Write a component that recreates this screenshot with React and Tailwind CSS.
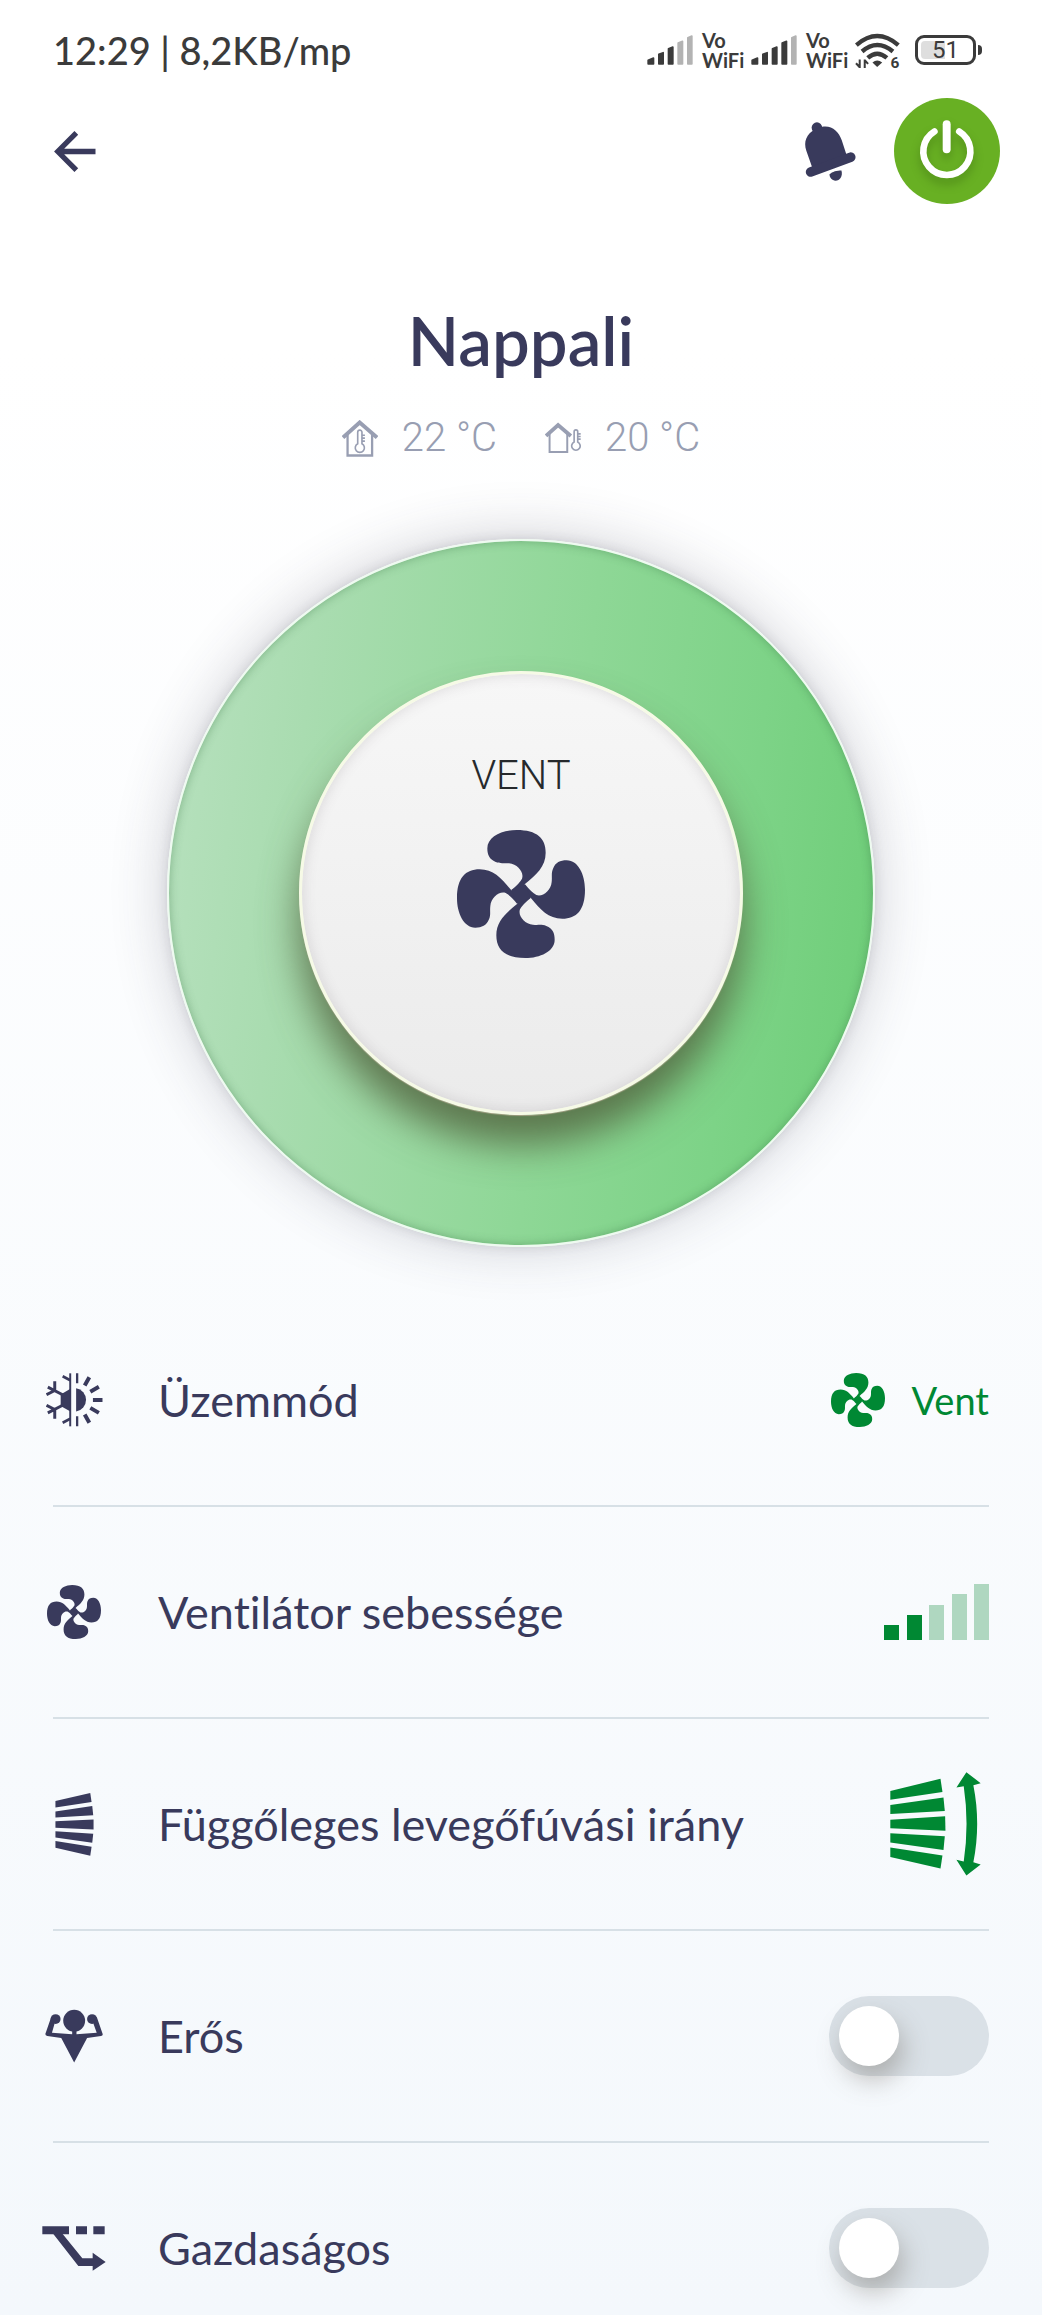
import { useState } from "react";

// =====================================
// ICONS
// =====================================

const BLADE =
  "M163 180 Q188 160 195 146 C202 128 182 102 156 100 C140 98 130 102 116 96 C97 88 91 75 91 55 C91 20 135 0 179 0 C240 0 266 25 266 68 C266 110 238 134 203 163 L192 192 Z";

function FanIcon({ className }) {
  return (
    <svg viewBox="0 0 384 384" fill="currentColor" className={className} aria-hidden="true">
      <path d={BLADE} />
      <path d={BLADE} transform="rotate(90 192 192)" />
      <path d={BLADE} transform="rotate(180 192 192)" />
      <path d={BLADE} transform="rotate(270 192 192)" />
      <path d="M163 180 L203 163 L221 203 L181 221 Z" />
    </svg>
  );
}

function BackIcon() {
  return (
    <svg viewBox="0 0 126 124" className="h-[41px] w-[42px]" fill="none" stroke="currentColor" strokeWidth="16" aria-hidden="true">
      <path d="M67 6 L11 62 L67 118 M11 62 H125" />
    </svg>
  );
}

function BellIcon() {
  return (
    <svg viewBox="523 365 154 178" className="h-[59px] w-[51px]" fill="currentColor" aria-hidden="true">
      <circle cx="559" cy="382" r="16" />
      <path d="M544 500 L527 452 C515 417 535 388 575 379 C604 374 625 393 634 420 L647 460 L655 480 L548 518 Z" />
      <path d="M540 516 L661 471" stroke="currentColor" strokeWidth="29" strokeLinecap="round" />
      <path d="M597 523 C605 514 620 511 633 511 C638 528 628 542 615 542 C605 542 597 534 597 523 Z" />
    </svg>
  );
}

function PowerIcon() {
  return (
    <svg
      viewBox="790 294 320 320"
      className="h-full w-full drop-shadow-[0_6px_5px_rgba(40,80,10,0.35)]"
      fill="none"
      stroke="white"
      strokeLinecap="round"
      aria-hidden="true"
    >
      <path d="M912 395 A71 71 0 1 0 987 395" strokeWidth="20" />
      <path d="M949 373 V449" strokeWidth="24" />
    </svg>
  );
}

function SignalIcon({ level }) {
  const bars = [
    "M56 183 L72 176 V194 H56 Z",
    "M88 165 L101 160 V194 H88 Z",
    "M117 148 L130 143 V194 H117 Z",
    "M146 131 L159 126 V194 H146 Z",
    "M175 115 L187 110 V194 H175 Z",
  ];

  return (
    <svg viewBox="53 107 137 90" className="h-[30px] w-[46px]" strokeWidth="5" strokeLinejoin="round" aria-hidden="true">
      {bars.map((d, i) => (
        <path
          key={d}
          d={d}
          className={i < level ? "fill-[#3b3b3b] stroke-[#3b3b3b]" : "fill-[#b3b3b3] stroke-[#b3b3b3]"}
        />
      ))}
    </svg>
  );
}

function WifiIcon() {
  return (
    <svg viewBox="680 80 140 140" className="size-[47px] font-[Roboto]" fill="none" stroke="currentColor" aria-hidden="true">
      <path d="M684 134 Q746 80 809 134" strokeWidth="13" />
      <path d="M701 153 Q746 114 793 153" strokeWidth="13" />
      <path d="M718 172 Q746 147 775 172" strokeWidth="13" />
      <path d="M732 186 Q746 174 761 186 L746 199 Z" fill="currentColor" stroke="none" />
      <path d="M694 177 V202 M683 188 L694 200 M709 202 V177 M719 190 L709 179" strokeWidth="6" />
      <text x="786" y="203" fontSize="46" fontWeight="700" fill="currentColor" stroke="none">6</text>
    </svg>
  );
}

function HouseInIcon() {
  return (
    <svg viewBox="131 413 110 112" className="h-[37px] w-9" fill="none" stroke="currentColor" aria-hidden="true">
      <path d="M134 466 L185 420 L238 466" strokeWidth="12" />
      <path d="M148 456 V521 H223 V456" strokeWidth="7" />
      <path d="M179 485 V450 a6 6 0 0 1 13 0 V485 a14 14 0 1 1 -13 0 Z" strokeWidth="5" />
      <path d="M192 459 H201 M192 468 H201 M192 477 H201" strokeWidth="5" />
    </svg>
  );
}

function HouseOutIcon() {
  return (
    <svg viewBox="734 413 110 112" className="h-[37px] w-9" fill="none" stroke="currentColor" aria-hidden="true">
      <path d="M737 461 L774 428 L813 461" strokeWidth="12" />
      <path d="M748 452 V510 H802 V452" strokeWidth="6" />
      <path d="M823 480 V448 a5 5 0 0 1 11 0 V480 a13 13 0 1 1 -11 0 Z" strokeWidth="5" />
      <path d="M834 455 H843 M834 463 H843 M834 471 H843" strokeWidth="5" />
    </svg>
  );
}

function ModeIcon() {
  return (
    <svg viewBox="80 97 172 164" className="h-[54px] w-[57px]" fill="none" stroke="currentColor" aria-hidden="true">
      <path d="M155 144 L124 162 V197 L155 215 Z" fill="currentColor" stroke="none" />
      <path d="M153 98 V259" strokeWidth="6" />
      <path d="M130 107 L153 119 M130 248 L153 236" strokeWidth="8" />
      <path d="M85 140 L130 163 M81 163 L106 150 M106 122 V150" strokeWidth="9" />
      <path d="M85 218 L130 195 M81 195 L106 208 M106 236 V208" strokeWidth="9" />
      <path d="M171 143 A36 36 0 0 1 171 214 Z" fill="currentColor" stroke="none" />
      <path d="M174 98 V128 M174 228 V259" strokeWidth="7" />
      <path d="M197 135 L211 110 M214 154 L240 139 M222 179 H251 M214 203 L240 218 M197 223 L211 248" strokeWidth="12" />
    </svg>
  );
}

function VaneIcon() {
  return (
    <svg viewBox="104 126 117 190" className="h-[63px] w-[39px]" fill="currentColor" aria-hidden="true">
      <path d="M105 150 L210 126 L214 153 L105 170 Z" />
      <path d="M105 182 L216 165 L219 193 L105 200 Z" />
      <path d="M105 211 L220 206 V236 L105 231 Z" />
      <path d="M105 241 L219 249 L216 276 L105 260 Z" />
      <path d="M105 271 L214 288 L210 315 L105 291 Z" />
    </svg>
  );
}

function SwingIcon() {
  return (
    <svg viewBox="271 97 274 312" className="mr-2 h-[104px] w-[91px]" fill="currentColor" aria-hidden="true">
      <path d="M272 154 L423 117 L429 157 L272 180 Z" />
      <path d="M272 196 L432 173 L436 214 L272 223 Z" />
      <path d="M272 240 L437 230 L438 273 L272 266 Z" />
      <path d="M272 281 L436 290 L432 331 L272 309 Z" />
      <path d="M272 324 L429 348 L423 387 L272 352 Z" />
      <path d="M501 97 L544 130 L522 136 Q545 252 522 368 L544 375 L501 408 L471 361 L493 366 Q510 252 493 139 L471 143 Z" />
    </svg>
  );
}

function StrongIcon() {
  return (
    <svg viewBox="75 777 175 162" className="h-[54px] w-[58px]" fill="currentColor" aria-hidden="true">
      <circle cx="163" cy="812" r="33" />
      <circle cx="107" cy="807" r="15" />
      <circle cx="217" cy="807" r="15" />
      <path d="M94 800 L76 852 Q76 857 82 858 L124 864 L163 938 L202 864 L244 858 Q250 857 249 852 L231 800 L221 820 L231 848 L170 853 V840 H157 V853 L96 848 L104 820 Z" />
    </svg>
  );
}

function EcoIcon() {
  return (
    <svg viewBox="66 230 192 135" className="h-[45px] w-16" fill="currentColor" aria-hidden="true">
      <path d="M67 231 H147 V255 H67 Z M168 231 H201 V255 H168 Z M220 231 H254 V255 H220 Z" />
      <path d="M100 254 H128 L187 327 H218 V310 L257 338 L218 364 V350 H175 Z" />
    </svg>
  );
}


// =====================================
// PARTS
// =====================================

function VoWifi() {
  return (
    <span className="w-10 text-[20px] font-bold leading-[20px]">
      Vo
      <br />
      WiFi
    </span>
  );
}

function StatusBar() {
  return (
    <div className="flex h-[100px] items-center justify-between pl-[53px] pr-[60px] text-[#3b3b3b]">
      <p className="text-[38px] font-medium leading-[48px]">12:29 | 8,2KB/mp</p>

      <div className="flex items-center gap-[9px]">
        <SignalIcon level={3} />
        <VoWifi />
        <SignalIcon level={4} />
        <VoWifi />
        <WifiIcon />

        <div className="ml-1 flex items-center gap-[2px]">
          <div className="h-[30px] w-[61px] rounded-[9px] border-[3px] border-[#3b3b3b] p-[3px]">
            <div className="flex h-full justify-center rounded-[4px] bg-linear-to-r from-[#dedede] from-50% to-transparent to-50% font-[Roboto] text-[24px] leading-[18px]">
              51
            </div>
          </div>
          <div className="h-[10px] w-1 rounded-r-sm bg-[#3b3b3b]" />
        </div>
      </div>
    </div>
  );
}

function Toggle({ id, checked, onChange }) {
  return (
    <input
      id={id}
      type="checkbox"
      role="switch"
      checked={checked}
      onChange={(e) => onChange(e.target.checked)}
      className="h-20 w-40 cursor-pointer appearance-none rounded-full bg-[#dae1e7] p-[10px] before:block before:size-[60px] before:rounded-full before:bg-white before:shadow-[4px_14px_26px_rgba(90,80,70,0.35)] before:transition checked:bg-[#008833] checked:before:translate-x-20"
    />
  );
}

function SpeedBars({ speed }) {
  const heights = ["h-[15px]", "h-[25px]", "h-[35px]", "h-[46px]", "h-[56px]"];

  return (
    <div className="flex w-[105px] items-end justify-between">
      {heights.map((h, i) => (
        <div
          key={h}
          className={`${h} w-[15px] ${i < speed ? "bg-[#008833]" : "bg-[#afd7c0]"}`}
        />
      ))}
    </div>
  );
}

function Row({ icon, label, htmlFor, children }) {
  return (
    <li className="flex h-[212px] items-center border-b-2 border-[#d7e0e6]">
      <div className="-ml-[11px] flex w-16 justify-center">{icon}</div>
      <label htmlFor={htmlFor} className="ml-[52px] flex-1 text-[45px] leading-[52px]">
        {label}
      </label>
      <div className="flex items-center text-[#008833]">{children}</div>
    </li>
  );
}


export default function App() {
  const [strong, setStrong] = useState(false);
  const [eco, setEco] = useState(false);

  return (
    <main className="h-screen overflow-hidden bg-linear-to-b from-white from-15% to-[#f4f8fc] font-[Lato,sans-serif] text-[#393a5c] [font-variant-ligatures:none]">
      <StatusBar />

      <header className="-mt-[2px] flex h-[106px] items-center pl-[54px] pr-[42px]">
        <button aria-label="Vissza" className="mr-auto">
          <BackIcon />
        </button>
        <button aria-label="Értesítések" className="mr-[38px]">
          <BellIcon />
        </button>
        <button aria-label="Be/ki" className="size-[106px] rounded-full bg-[#68b023]">
          <PowerIcon />
        </button>
      </header>

      <h1 className="mt-24 text-center text-[67px] font-semibold leading-[80px]">Nappali</h1>

      <div className="mt-[34px] flex items-center justify-center gap-12 font-[Roboto] text-[40px] font-light leading-[48px] text-[#989eb2]">
        <p className="flex items-center gap-6">
          <HouseInIcon />
          22 °C
        </p>
        <p className="flex items-center gap-6">
          <HouseOutIcon />
          20 °C
        </p>
      </div>

      {/* DIAL */}

      <div className="mx-auto mt-[77px] flex size-[708px] items-center justify-center rounded-full border-2 border-[#eefaf0] bg-linear-[97deg,#b8e1bf,#a9dcb0_20%,#8ed796_55%,#7dd387_78%,#6ccd76] shadow-[0_-2px_56px_rgba(60,60,80,0.24),0_0_12px_rgba(60,60,80,0.16),inset_0_0_10px_rgba(60,120,70,0.45)]">
        <div className="flex size-[444px] flex-col items-center rounded-full border-[3px] border-[#f6fae6] bg-linear-to-b from-[#f7f7f7] to-[#ebebeb] pt-[78px] shadow-[0_1px_1px_#a9a48a,0_30px_38px_rgba(78,92,58,0.78),inset_0_0_14px_rgba(90,80,90,0.18)]">
          <p className="font-[Roboto] text-[40px] font-light leading-[48px] text-[#26292c]">VENT</p>
          <FanIcon className="mt-[30px] size-32" />
        </div>
      </div>

      {/* SETTINGS */}

      <ul className="mt-12 px-[53px]">
        <Row icon={<ModeIcon />} label="Üzemmód">
          <FanIcon className="size-[54px]" />
          <span className="ml-[26px] text-[38px] leading-[48px]">Vent</span>
        </Row>

        <Row icon={<FanIcon className="size-[54px]" />} label="Ventilátor sebessége">
          <SpeedBars speed={2} />
        </Row>

        <Row icon={<VaneIcon />} label="Függőleges levegőfúvási irány">
          <SwingIcon />
        </Row>

        <Row icon={<StrongIcon />} label="Erős" htmlFor="strong">
          <Toggle id="strong" checked={strong} onChange={setStrong} />
        </Row>

        <Row icon={<EcoIcon />} label="Gazdaságos" htmlFor="eco">
          <Toggle id="eco" checked={eco} onChange={setEco} />
        </Row>
      </ul>
    </main>
  );
}
